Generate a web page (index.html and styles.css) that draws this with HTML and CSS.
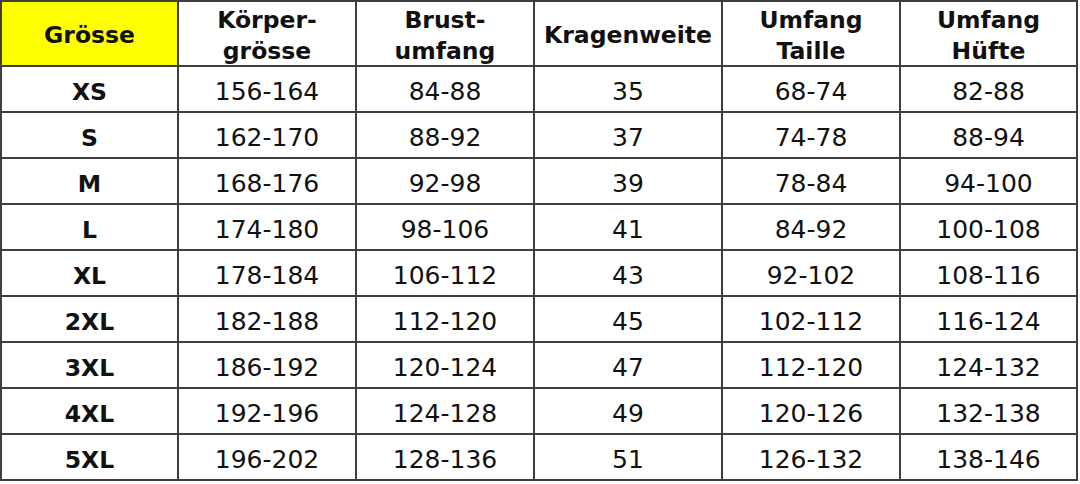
FILE: index.html
```html
<!DOCTYPE html>
<html lang="de">
<head>
<meta charset="utf-8">
<title>Grössentabelle</title>
<link rel="stylesheet" href="styles.css">
</head>
<body>
<div class="size-table">
  <div class="cell head yellow">Grösse</div>
  <div class="cell head">Körper-<br>grösse</div>
  <div class="cell head">Brust-<br>umfang</div>
  <div class="cell head">Kragenweite</div>
  <div class="cell head">Umfang<br>Taille</div>
  <div class="cell head">Umfang<br>Hüfte</div>

  <div class="cell size">XS</div><div class="cell">156-164</div><div class="cell">84-88</div><div class="cell">35</div><div class="cell">68-74</div><div class="cell">82-88</div>
  <div class="cell size">S</div><div class="cell">162-170</div><div class="cell">88-92</div><div class="cell">37</div><div class="cell">74-78</div><div class="cell">88-94</div>
  <div class="cell size">M</div><div class="cell">168-176</div><div class="cell">92-98</div><div class="cell">39</div><div class="cell">78-84</div><div class="cell">94-100</div>
  <div class="cell size">L</div><div class="cell">174-180</div><div class="cell">98-106</div><div class="cell">41</div><div class="cell">84-92</div><div class="cell">100-108</div>
  <div class="cell size">XL</div><div class="cell">178-184</div><div class="cell">106-112</div><div class="cell">43</div><div class="cell">92-102</div><div class="cell">108-116</div>
  <div class="cell size">2XL</div><div class="cell">182-188</div><div class="cell">112-120</div><div class="cell">45</div><div class="cell">102-112</div><div class="cell">116-124</div>
  <div class="cell size">3XL</div><div class="cell">186-192</div><div class="cell">120-124</div><div class="cell">47</div><div class="cell">112-120</div><div class="cell">124-132</div>
  <div class="cell size">4XL</div><div class="cell">192-196</div><div class="cell">124-128</div><div class="cell">49</div><div class="cell">120-126</div><div class="cell">132-138</div>
  <div class="cell size">5XL</div><div class="cell">196-202</div><div class="cell">128-136</div><div class="cell">51</div><div class="cell">126-132</div><div class="cell">138-146</div>
</div>
</body>
</html>
```

FILE: styles.css
```css
html, body {
  margin: 0;
  padding: 0;
  background: #ffffff;
}

body {
  font-family: "DejaVu Sans", Verdana, sans-serif;
  color: #111111;
}

.size-table {
  display: grid;
  grid-template-columns: 177px 178px 178px 188px 178px 177px;
  grid-template-rows: 65px repeat(9, 46px);
  width: 1078px;
  box-sizing: border-box;
  border-left: 2px solid #3e3e3e;
  border-top: 2px solid #3e3e3e;
}

.cell {
  box-sizing: border-box;
  border-right: 2px solid #3e3e3e;
  border-bottom: 2px solid #3e3e3e;
  display: flex;
  align-items: center;
  justify-content: center;
  text-align: center;
  font-size: 25px;
  padding-top: 5px;
}

.head {
  font-weight: bold;
  font-size: 23.5px;
  line-height: 31px;
  padding-top: 4px;
}

.yellow {
  background: #ffff00;
}

.size {
  font-weight: bold;
  font-size: 23.5px;
}
```
